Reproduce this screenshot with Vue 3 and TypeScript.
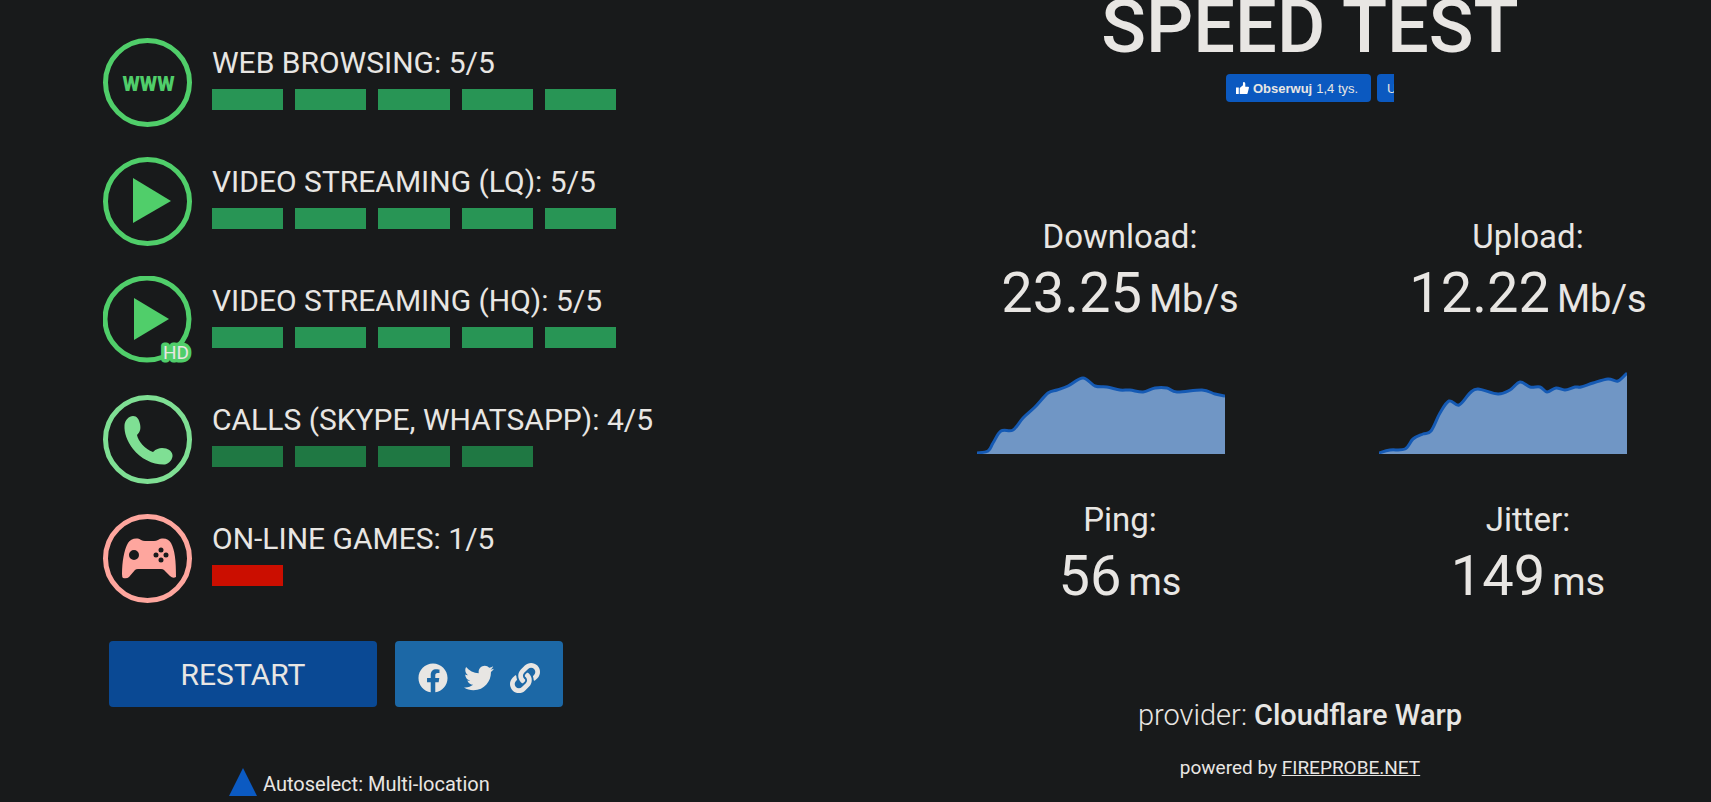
<script setup lang="ts">
type IconName = 'www' | 'play' | 'hd' | 'phone' | 'gamepad'

interface Rating {
  label: string
  score: number
  icon: IconName
  tone: 'great' | 'good' | 'bad'
}

interface Metric {
  label: string
  value: string
  unit: string
}

type Point = [number, number]

const ratings: Rating[] = [
  { label: 'WEB BROWSING', score: 5, icon: 'www', tone: 'great' },
  { label: 'VIDEO STREAMING (LQ)', score: 5, icon: 'play', tone: 'great' },
  { label: 'VIDEO STREAMING (HQ)', score: 5, icon: 'hd', tone: 'great' },
  { label: 'CALLS (SKYPE, WHATSAPP)', score: 4, icon: 'phone', tone: 'good' },
  { label: 'ON-LINE GAMES', score: 1, icon: 'gamepad', tone: 'bad' },
]

const speeds: Metric[] = [
  { label: 'Download:', value: '23.25', unit: 'Mb/s' },
  { label: 'Upload:', value: '12.22', unit: 'Mb/s' },
]

const latencies: Metric[] = [
  { label: 'Ping:', value: '56', unit: 'ms' },
  { label: 'Jitter:', value: '149', unit: 'ms' },
]

const chartHeight = 84

const samples: { name: string; points: Point[] }[] = [
  {
    name: 'Download speed over time',
    points: [
      [0, 1], [11, 3], [16, 11], [24, 23], [36, 24], [46, 36], [58, 47], [71, 61],
      [80, 64], [91, 68], [106, 76], [118, 68], [130, 67], [143, 64], [153, 64],
      [166, 62], [178, 66], [190, 66], [200, 62], [225, 64], [238, 60], [248, 58],
    ],
  },
  {
    name: 'Upload speed over time',
    points: [
      [0, 1], [11, 4], [26, 5], [34, 15], [44, 20], [52, 23], [61, 41], [70, 53],
      [80, 49], [91, 61], [99, 65], [119, 60], [131, 64], [141, 72], [151, 67],
      [161, 67], [168, 62], [177, 66], [186, 64], [196, 67], [202, 67], [214, 71],
      [229, 75], [239, 73], [248, 81],
    ],
  },
]

// Catmull-Rom spline through the samples, written as cubic Bézier segments
function curve(points: Point[]): string {
  const p = points.map(([x, h]): Point => [x, chartHeight - h])
  let d = `M${p[0][0]} ${p[0][1]}`
  for (let i = 0; i < p.length - 1; i++) {
    const a = p[Math.max(i - 1, 0)]
    const b = p[i]
    const c = p[i + 1]
    const e = p[Math.min(i + 2, p.length - 1)]
    d += `C${b[0] + (c[0] - a[0]) / 6} ${b[1] + (c[1] - a[1]) / 6} ${c[0] - (e[0] - b[0]) / 6} ${c[1] - (e[1] - b[1]) / 6} ${c[0]} ${c[1]}`
  }
  return d
}

const charts = samples.map((s) => {
  const line = curve(s.points)
  return { name: s.name, line, area: `${line}V${chartHeight}H0Z` }
})
</script>

<template>
  <main class="page">
    <section class="results">
      <ul class="ratings">
        <li v-for="r in ratings" :key="r.label" class="rating" :class="r.tone">
          <svg class="badge" viewBox="0 0 89 89" aria-hidden="true">
            <ellipse v-if="r.icon === 'hd'" class="ring" cx="44" cy="43" rx="42" ry="41" />
            <circle v-else class="ring" cx="44.5" cy="44.5" r="42" />
            <text v-if="r.icon === 'www'" class="www" x="45.5" y="53" text-anchor="middle">WWW</text>
            <path v-else-if="r.icon === 'play'" d="M30 21L68 44L30 66Z" />
            <template v-else-if="r.icon === 'hd'">
              <path d="M31 22L66 43L31 64Z" />
              <text class="hd" x="73" y="83" text-anchor="middle">HD</text>
            </template>
            <path
              v-else-if="r.icon === 'phone'"
              d="M21.500 30C22 25 26 21 30 21C34 21 36 24 37 29C38 34 37 37 34 40C35 46 42 54 50 57C53 54 56 53 59 53C65 53 69 56 69.500 60C70 64 66 69 62 69.500C50 70 38 64 30 54C24 46 21 38 21.500 30Z"
            />
            <path
              v-else
              fill-rule="evenodd"
              d="M19 60C19 48 21 36 25 29C27 25 34 23 38 26Q40 27 42 27H51Q53 27 55 26C60 23 66 25 68 29C72 37 73 46 73 63Q70 65 67 62L61 56Q60 55 58 55H35Q33 55 32 56L26 63Q24 65 20 64Q19 63 19 60ZM26 41a5 5 0 1 0 10 0a5 5 0 1 0 -10 0ZM55.500 36a2.500 2.500 0 1 0 5 0a2.500 2.500 0 1 0 -5 0ZM50.500 41a2.500 2.500 0 1 0 5 0a2.500 2.500 0 1 0 -5 0ZM60.500 41a2.500 2.500 0 1 0 5 0a2.500 2.500 0 1 0 -5 0ZM55.500 46a2.500 2.500 0 1 0 5 0a2.500 2.500 0 1 0 -5 0Z"
            />
          </svg>
          <div class="rating-body">
            <p class="rating-label">{{ r.label }}: {{ r.score }}/5</p>
            <div class="bars">
              <span v-for="n in r.score" :key="n" class="bar"></span>
            </div>
          </div>
        </li>
      </ul>

      <div class="actions">
        <button type="button" class="restart">RESTART</button>
        <div class="share">
          <a href="#facebook" aria-label="Share on Facebook">
            <svg viewBox="0 0 512 512" aria-hidden="true">
              <path d="M504 256C504 119 393 8 256 8S8 119 8 256c0 123.780 90.690 226.380 209.250 245V327.690h-63V256h63v-54.640c0-62.150 37-96.480 93.670-96.480 27.140 0 55.520 4.840 55.520 4.840v61h-31.280c-30.800 0-40.410 19.120-40.410 38.730V256h68.780l-11 71.690h-57.780V501C413.310 482.380 504 379.780 504 256z" />
            </svg>
          </a>
          <a href="#twitter" aria-label="Share on Twitter">
            <svg viewBox="0 0 512 512" aria-hidden="true">
              <path d="M459.370 151.716c.325 4.548.325 9.097.325 13.645 0 138.720-105.583 298.558-298.558 298.558-59.452 0-114.680-17.219-161.137-47.106 8.447.974 16.568 1.299 25.340 1.299 49.055 0 94.213-16.568 130.274-44.832-46.132-.975-84.792-31.188-98.112-72.772 6.498.974 12.995 1.624 19.818 1.624 9.421 0 18.843-1.300 27.614-3.573-48.081-9.747-84.143-51.980-84.143-102.985v-1.299c13.969 7.797 30.214 12.670 47.431 13.319-28.264-18.843-46.781-51.005-46.781-87.391 0-19.492 5.197-37.360 14.294-52.954 51.655 63.675 129.300 105.258 216.365 109.807-1.624-7.797-2.599-15.918-2.599-24.040 0-57.828 46.782-104.934 104.934-104.934 30.213 0 57.502 12.670 76.670 33.137 23.715-4.548 46.456-13.320 66.599-25.340-7.798 24.366-24.366 44.833-46.132 57.827 21.117-2.273 41.584-8.122 60.426-16.243-14.292 20.791-32.161 39.308-52.628 54.253z" />
            </svg>
          </a>
          <a href="#link" aria-label="Copy link">
            <svg viewBox="0 0 512 512" aria-hidden="true">
              <path d="M326.612 185.391c59.747 59.809 58.927 155.698.36 214.590-.11.12-.24.25-.36.37l-67.200 67.200c-59.270 59.270-155.699 59.262-214.960 0-59.270-59.260-59.270-155.700 0-214.960l37.106-37.106c9.840-9.840 26.786-3.300 27.294 10.606.648 17.722 3.826 35.527 9.690 52.721 1.986 5.822.567 12.262-3.783 16.612l-13.087 13.087c-28.026 28.026-28.905 73.660-1.155 101.960 28.024 28.579 74.086 28.749 102.325.51l67.200-67.190c28.191-28.191 28.073-73.757 0-101.830-3.701-3.694-7.429-6.564-10.341-8.569a16.037 16.037 0 0 1-6.947-12.606c-.396-10.567 3.348-21.456 11.698-29.806l21.054-21.055c5.521-5.521 14.182-6.199 20.584-1.731a152.482 152.482 0 0 1 20.522 17.197zM467.547 44.449c-59.261-59.262-155.690-59.270-214.960 0l-67.200 67.200c-.12.12-.25.25-.36.37-58.566 58.892-59.387 154.781.36 214.590a152.454 152.454 0 0 0 20.521 17.196c6.402 4.468 15.064 3.789 20.584-1.731l21.054-21.055c8.350-8.350 12.094-19.239 11.698-29.806a16.037 16.037 0 0 0-6.947-12.606c-2.912-2.005-6.640-4.875-10.341-8.569-28.073-28.073-28.191-73.639 0-101.830l67.200-67.190c28.239-28.239 74.300-28.069 102.325.51 27.750 28.300 26.872 73.934-1.155 101.960l-13.087 13.087c-4.350 4.350-5.769 10.790-3.783 16.612 5.864 17.194 9.042 34.999 9.690 52.721.509 13.906 17.454 20.446 27.294 10.606l37.106-37.106c59.271-59.259 59.271-155.699.001-214.959z" />
            </svg>
          </a>
        </div>
      </div>

      <p class="server">
        <svg class="triangle" viewBox="0 0 28 28" aria-hidden="true"><path d="M14 0L28 28H0Z" /></svg>
        Autoselect: Multi-location
      </p>
    </section>

    <section class="speed">
      <h1 class="title">SPEED TEST</h1>

      <div class="social">
        <button type="button" class="fb follow">
          <svg viewBox="0 0 14 14" aria-hidden="true">
            <path d="M0 6H3V13H0ZM4 13V6.500L7.500 3.500V1Q7.500 0 8.500 0Q10 0 10 2V5H13Q14 5 14 6L12.500 12Q12.200 13 11 13Z" />
          </svg>
          <b>Obserwuj</b><span>1,4 tys.</span>
        </button>
        <button type="button" class="fb clipped">U</button>
      </div>

      <dl class="metrics">
        <div v-for="m in speeds" :key="m.label" class="metric">
          <dt>{{ m.label }}</dt>
          <dd><span class="value">{{ m.value }}</span><span class="unit">{{ m.unit }}</span></dd>
        </div>
      </dl>

      <div class="charts">
        <svg v-for="c in charts" :key="c.name" class="chart" :viewBox="`0 0 248 ${chartHeight}`" role="img" :aria-label="c.name">
          <path class="area" :d="c.area" />
          <path class="line" :d="c.line" />
        </svg>
      </div>

      <dl class="metrics">
        <div v-for="m in latencies" :key="m.label" class="metric">
          <dt>{{ m.label }}</dt>
          <dd><span class="value">{{ m.value }}</span><span class="unit">{{ m.unit }}</span></dd>
        </div>
      </dl>

      <footer class="credits">
        <p class="provider">provider: <strong>Cloudflare Warp</strong></p>
        <p class="powered">powered by <a href="#fireprobe">FIREPROBE.NET</a></p>
      </footer>
    </section>
  </main>
</template>

<style>
body {
  margin: 0;
  background: #181a1b;
}
</style>

<style scoped>
.page {
  display: grid;
  grid-template-columns: 909fr 802fr;
  color: #e8e6e3;
  font-family: Roboto, "Noto Sans", sans-serif;
}

p,
dl,
dd,
h1,
ul {
  margin: 0;
  padding: 0;
}

.results {
  padding: 38px 0 0 103px;
}

.ratings {
  display: flex;
  flex-direction: column;
  gap: 30px;
  list-style: none;
}

.rating {
  display: flex;
  gap: 20px;
}

.great {
  --icon: #50ce6a;
  --bar: #289555;
}

.good {
  --icon: #7fdf94;
  --bar: #1f7843;
}

.bad {
  --icon: #fea69e;
  --bar: #cb0e00;
}

.badge {
  flex: none;
  width: 89px;
  height: 89px;
  fill: var(--icon);
}

.ring {
  fill: none;
  stroke: var(--icon);
  stroke-width: 5px;
}

.www {
  font-size: 20px;
  font-weight: 900;
}

.hd {
  fill: #e8e6e3;
  stroke: var(--icon);
  stroke-width: 7px;
  stroke-linejoin: round;
  paint-order: stroke;
  font-size: 19px;
}

.rating-body {
  padding-top: 7px;
}

.rating-label {
  font-size: 30px;
  line-height: 36px;
  white-space: nowrap;
}

.bars {
  display: grid;
  grid-template-columns: repeat(5, 1fr);
  gap: 12px;
  width: 404px;
  margin-top: 8px;
}

.bar {
  height: 21px;
  background: var(--bar);
}

.actions {
  display: flex;
  gap: 18px;
  margin: 38px 0 0 6px;
}

.restart {
  width: 268px;
  height: 66px;
  padding: 0;
  border: 0;
  border-radius: 4px;
  background: #0a4994;
  color: #e8e6e3;
  font: inherit;
  font-size: 30px;
}

.share {
  display: flex;
  align-items: center;
  justify-content: center;
  gap: 16px;
  width: 168px;
  padding-top: 8px;
  box-sizing: border-box;
  border-radius: 4px;
  background: #1c68a6;
}

.share a,
.share svg {
  display: block;
  width: 30px;
  height: 30px;
  fill: #e8e6e3;
}

.server {
  display: flex;
  align-items: flex-end;
  gap: 6px;
  margin: 61px 0 0 126px;
  font-size: 20px;
  line-height: 24px;
}

.triangle {
  width: 28px;
  height: 28px;
  fill: #0b5ac2;
}

.title {
  font-size: 74px;
  font-weight: 500;
  line-height: 54px;
  text-align: center;
}

.social {
  display: flex;
  justify-content: center;
  gap: 6px;
  margin-top: 20px;
}

.fb {
  display: flex;
  align-items: center;
  box-sizing: border-box;
  height: 28px;
  padding: 0 10px;
  border: 0;
  border-radius: 4px;
  background: #0b59c0;
  color: #e8e6e3;
  font-family: "Liberation Sans", Arial, sans-serif;
  font-size: 13px;
}

.follow {
  gap: 4px;
  width: 145px;
}

.follow svg {
  width: 13px;
  height: 13px;
  fill: #fff;
}

.clipped {
  width: 17px;
  border-radius: 4px 0 0 4px;
  padding-right: 0;
  overflow: hidden;
}

.metrics {
  display: grid;
  grid-template-columns: 1fr 1fr;
  gap: 42px;
  margin-top: 116px;
  padding-left: 28px;
}

.metric {
  text-align: center;
}

.metric dt {
  font-size: 33px;
  line-height: 38px;
}

.metric dd {
  display: flex;
  align-items: baseline;
  justify-content: center;
  gap: 7px;
  line-height: 74px;
}

.value {
  font-size: 56px;
}

.unit {
  font-size: 38px;
}

.charts {
  display: flex;
  justify-content: center;
  gap: 154px;
  margin-top: 34px;
  padding-right: 16px;
}

.chart {
  width: 248px;
  height: 84px;
}

.area {
  fill: #7096c5;
}

.line {
  fill: none;
  stroke: #155ab4;
  stroke-width: 3px;
}

.charts + .metrics {
  margin-top: 47px;
}

.credits {
  margin-top: 79px;
  padding-right: 20px;
  text-align: center;
}

.provider {
  font-size: 29px;
  font-weight: 300;
  line-height: 34px;
}

.provider strong {
  font-weight: 500;
}

.powered {
  margin-top: 24px;
  font-size: 19px;
  line-height: 24px;
}

.powered a {
  color: inherit;
}
</style>
